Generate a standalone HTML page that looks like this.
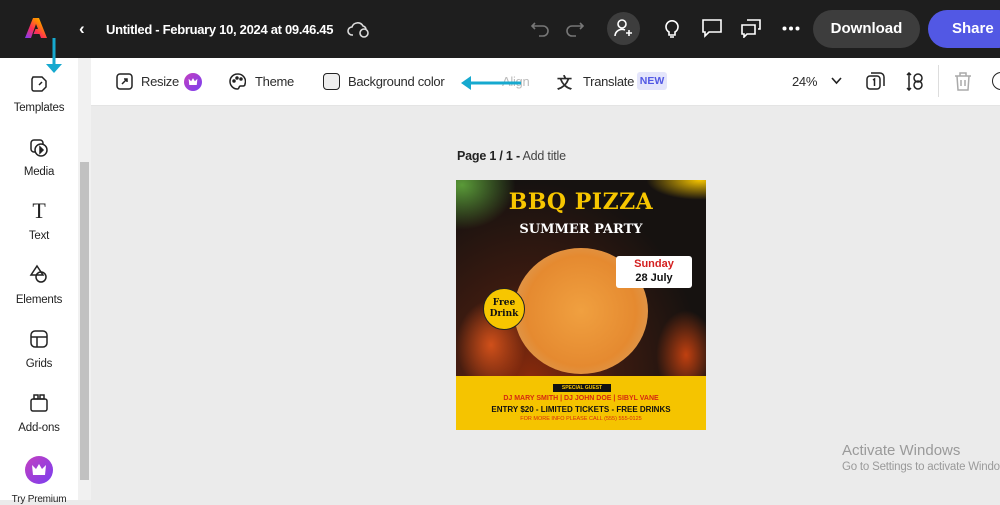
<!DOCTYPE html>
<html><head><meta charset="utf-8"><style>
*{margin:0;padding:0;box-sizing:border-box}
body{width:1000px;height:500px;overflow:hidden;background:#ebebeb;font-family:"Liberation Sans",sans-serif;position:relative}
.top{position:absolute;left:0;top:0;width:1000px;height:58px;background:#1e1e1e;color:#fff}
.abs{position:absolute;white-space:nowrap}
.side{position:absolute;left:0;top:58px;width:78px;height:442px;background:#fff}
.sb{position:absolute;left:78px;top:58px;width:13px;height:442px;background:#f1f1f1}
.thumb{position:absolute;left:80px;top:162px;width:9px;height:318px;background:#c1c1c1}
.tool{position:absolute;left:91px;top:58px;width:909px;height:48px;background:#fff;border-bottom:1px solid #e4e4e4}
.si{position:absolute;width:78px;text-align:center;font-size:11.5px;color:#222;letter-spacing:-0.2px}
.tl{position:absolute;top:74px;font-size:13px;color:#2c2c2c;letter-spacing:-0.3px;white-space:nowrap}
svg{position:absolute}
</style></head><body>
<div class="top">
 <svg style="left:24px;top:16px" width="24" height="24" viewBox="0 0 24 24"><defs><linearGradient id="g" x1="0" y1="1" x2="1" y2="0"><stop offset="0" stop-color="#7b3cff"/><stop offset=".4" stop-color="#ff2d55"/><stop offset=".7" stop-color="#ff8a00"/><stop offset="1" stop-color="#ffd000"/></linearGradient></defs><path d="M9 2h6l8 20h-6l-1.5-4h-6l2-5h2.5l-2-5-5 14H1z" fill="url(#g)"/></svg>
 <div class="abs" style="left:79px;top:19px;font-size:17px;font-weight:bold">&#8249;</div>
 <div class="abs" style="left:106px;top:22px;font-size:13px;font-weight:bold;letter-spacing:-0.3px">Untitled - February 10, 2024 at 09.46.45</div>
 <svg style="left:347px;top:19px" width="24" height="20" viewBox="0 0 24 20" fill="none" stroke="#ddd" stroke-width="1.6"><path d="M6 16h-1a4 4 0 010-8 6 6 0 0111-1 4 4 0 013 3"/><circle cx="17" cy="14" r="4"/></svg>
 <svg style="left:531px;top:19px" width="20" height="18" viewBox="0 0 20 18" fill="none" stroke="#777" stroke-width="1.6"><path d="M4 4l-3 3 3 3M1 7h11a5 5 0 010 10H8"/></svg>
 <svg style="left:564px;top:19px" width="20" height="18" viewBox="0 0 20 18" fill="none" stroke="#777" stroke-width="1.6"><path d="M16 4l3 3-3 3M19 7H8a5 5 0 000 10h4"/></svg>
 <div class="abs" style="left:607px;top:12px;width:33px;height:33px;border-radius:50%;background:#3d3d3d"></div>
 <svg style="left:614px;top:18px" width="20" height="20" viewBox="0 0 20 20" fill="none" stroke="#fff" stroke-width="1.6"><circle cx="8" cy="6" r="4"/><path d="M1 18a7 7 0 0110-6M15 12v6M12 15h6"/></svg>
 <svg style="left:664px;top:18px" width="16" height="20" viewBox="0 0 16 20" fill="none" stroke="#fff" stroke-width="1.6"><path d="M5 14a6 6 0 116 0v3H5zM6 19h4"/></svg>
 <svg style="left:701px;top:18px" width="22" height="20" viewBox="0 0 22 20" fill="none" stroke="#fff" stroke-width="1.6"><path d="M2 2h18v12H8l-4 4v-4H2z"/></svg>
 <svg style="left:740px;top:18px" width="22" height="20" viewBox="0 0 22 20" fill="none" stroke="#fff" stroke-width="1.6"><path d="M7 2h13v9h-2M2 7h13v9H7l-3 3v-3H2z"/></svg>
 <svg style="left:782px;top:26px" width="18" height="5" viewBox="0 0 18 5" fill="#fff"><circle cx="2.5" cy="2.5" r="2"/><circle cx="9" cy="2.5" r="2"/><circle cx="15.5" cy="2.5" r="2"/></svg>
 <div class="abs" style="left:813px;top:10px;width:107px;height:38px;border-radius:19px;background:#3d3d3d;font-size:15px;font-weight:bold;text-align:center;line-height:38px">Download</div>
 <div class="abs" style="left:928px;top:10px;width:90px;height:38px;border-radius:19px;background:#5258e4;font-size:15px;font-weight:bold;line-height:38px;padding-left:24px">Share</div>
</div>
<div class="side">
 <svg style="left:29px;top:16px" width="20" height="20" viewBox="0 0 20 20" fill="none" stroke="#222" stroke-width="1.5"><path d="M4 3h9l4 4v6l-4 4H5a2 2 0 01-2-2V5z"/><path d="M10 11l3-3"/></svg>
 <div class="si" style="top:44px">Templates</div>
 <svg style="left:29px;top:80px" width="20" height="20" viewBox="0 0 20 20" fill="none" stroke="#222" stroke-width="1.5"><rect x="2" y="2" width="12" height="12" rx="3"/><circle cx="12" cy="12" r="6" fill="#fff"/><path d="M11 9l3 3-3 3z" fill="#222"/></svg>
 <div class="si" style="top:108px">Media</div>
 <div class="si" style="top:140px;font-size:22px;font-family:'Liberation Serif',serif">T</div>
 <div class="si" style="top:172px">Text</div>
 <svg style="left:29px;top:206px" width="20" height="20" viewBox="0 0 20 20" fill="none" stroke="#222" stroke-width="1.5"><path d="M8 2l6 9H2z"/><circle cx="12" cy="13" r="5"/></svg>
 <div class="si" style="top:236px">Elements</div>
 <svg style="left:29px;top:271px" width="20" height="20" viewBox="0 0 20 20" fill="none" stroke="#222" stroke-width="1.5"><rect x="2" y="2" width="16" height="16" rx="4"/><path d="M2 8h16M8 8v10"/></svg>
 <div class="si" style="top:300px">Grids</div>
 <svg style="left:29px;top:335px" width="20" height="20" viewBox="0 0 20 20" fill="none" stroke="#222" stroke-width="1.5"><rect x="2" y="6" width="16" height="12" rx="2"/><rect x="5" y="2" width="4" height="4"/><rect x="11" y="2" width="4" height="4"/></svg>
 <div class="si" style="top:364px">Add-ons</div>
 <div class="abs" style="left:25px;top:398px;width:28px;height:28px;border-radius:50%;background:linear-gradient(135deg,#c33fc0,#7a3ff0)"></div>
 <svg style="left:31px;top:405px" width="16" height="13" viewBox="0 0 16 13"><path d="M1 2l4 4 3-5 3 5 4-4-1 10H2z" fill="#fff"/></svg>
 <div class="si" style="top:436px;font-size:10px">Try Premium</div>
</div>
<div class="sb"></div><div class="thumb"></div>
<svg style="left:44px;top:38px" width="20" height="36" viewBox="0 0 20 36"><path d="M10 0v30" stroke="#16a9cf" stroke-width="3"/><path d="M2 26l8 9 8-9z" fill="#16a9cf"/></svg>
<div class="tool"></div>
<svg style="left:116px;top:73px" width="17" height="17" viewBox="0 0 17 17" fill="none" stroke="#222" stroke-width="1.5"><rect x="1" y="1" width="15" height="15" rx="3"/><path d="M6 11l5-5M8 6h3v3"/></svg>
<div class="tl" style="left:141px">Resize</div>
<div class="abs" style="left:184px;top:73px;width:18px;height:18px;border-radius:50%;background:linear-gradient(135deg,#c33fc0,#7a3ff0)"></div>
<svg style="left:188px;top:77px" width="10" height="9" viewBox="0 0 16 13"><path d="M1 2l4 4 3-5 3 5 4-4-1 10H2z" fill="#fff"/></svg>
<svg style="left:229px;top:73px" width="17" height="17" viewBox="0 0 17 17" fill="none" stroke="#222" stroke-width="1.5"><path d="M8.5 1a7.5 7.5 0 000 15c2 0 1-3 3-3h3a2 2 0 001.5-2A7.5 7.5 0 008.5 1z"/><circle cx="5" cy="8" r="1" fill="#222"/><circle cx="8" cy="5" r="1" fill="#222"/><circle cx="12" cy="6" r="1" fill="#222"/></svg>
<div class="tl" style="left:255px">Theme</div>
<div class="abs" style="left:323px;top:73px;width:17px;height:17px;border:1.6px solid #222;border-radius:4px;background:#eee"></div>
<div class="tl" style="left:348px">Background color</div>
<div class="tl" style="left:502px;color:#bbb">Align</div>
<svg style="left:461px;top:75px" width="60" height="16" viewBox="0 0 60 16"><path d="M8 8h52" stroke="#16a9cf" stroke-width="3"/><path d="M0 8l10-7v14z" fill="#16a9cf"/></svg>
<div class="tl" style="left:557px;font-weight:bold;font-size:15px;top:72px">&#25991;</div>
<div class="tl" style="left:583px">Translate</div>
<div class="abs" style="left:637px;top:72px;width:30px;height:18px;background:#e4e5fb;border-radius:3px;color:#5258e4;font-size:10.5px;font-weight:bold;text-align:center;line-height:18px">NEW</div>
<div class="tl" style="left:792px">24%</div>
<svg style="left:831px;top:77px" width="11" height="8" viewBox="0 0 11 8" fill="none" stroke="#222" stroke-width="1.6"><path d="M1 1l4.5 5L10 1"/></svg>
<svg style="left:866px;top:72px" width="19" height="19" viewBox="0 0 19 19" fill="none" stroke="#222" stroke-width="1.5"><rect x="1" y="4" width="13" height="13" rx="3"/><path d="M5 1h9a4 4 0 014 4v9"/><path d="M7 8l1.5-1v7" /></svg>
<svg style="left:906px;top:72px" width="18" height="19" viewBox="0 0 18 19" fill="none" stroke="#222" stroke-width="1.5"><path d="M3 1v17M1 3l2-2 2 2M1 16l2 2 2-2"/><circle cx="12" cy="6" r="4"/><circle cx="12" cy="13" r="4"/></svg>
<div class="abs" style="left:938px;top:65px;width:1px;height:32px;background:#ddd"></div>
<svg style="left:954px;top:72px" width="18" height="19" viewBox="0 0 18 19" fill="none" stroke="#aaa" stroke-width="1.5"><path d="M1 4h16M6 4V1h6v3M3 4l1 14h10l1-14M7 8v6M11 8v6"/></svg>
<div class="abs" style="left:992px;top:72px;width:18px;height:18px;border:1.6px solid #222;border-radius:50%"></div>
<div class="abs" style="left:457px;top:149px;font-size:12.5px;color:#222;letter-spacing:-0.2px"><b>Page 1 / 1 -</b> <span style="color:#444">Add title</span></div>
<!-- poster -->
<div class="abs" style="left:456px;top:180px;width:250px;height:250px;overflow:hidden;background:radial-gradient(ellipse at 30% 80%,#8a2a0c 0,#3a1a10 35%,#161210 70%)">
 <div class="abs" style="left:0;top:0;width:60px;height:50px;background:radial-gradient(ellipse at 10% 10%,#5a9a38,transparent 70%)"></div>
 <div class="abs" style="left:190px;top:0;width:60px;height:20px;background:radial-gradient(ellipse at 90% 0,#f5c400,transparent 70%)"></div>
 <div class="abs" style="left:0;top:120px;width:70px;height:90px;background:radial-gradient(ellipse,#d0501a,transparent 70%)"></div>
 <div class="abs" style="left:200px;top:130px;width:60px;height:90px;background:radial-gradient(ellipse,#c04010,transparent 70%)"></div>
 <div class="abs" style="left:0;top:9px;width:250px;text-align:center;color:#f7c600;font-family:'DejaVu Serif',serif;font-weight:bold;font-size:22px;letter-spacing:0.5px">BBQ PIZZA</div>
 <div class="abs" style="left:0;top:42px;width:250px;text-align:center;color:#fff;font-family:'DejaVu Serif',serif;font-weight:bold;font-size:13px">SUMMER PARTY</div>
 <div class="abs" style="left:58px;top:68px;width:134px;height:126px;border-radius:50%;background:radial-gradient(circle,#f0a040 0,#e58a30 60%,#d9a060 88%,#b8884c 100%)"></div>
 <div class="abs" style="left:160px;top:76px;width:76px;height:32px;background:#fff;border-radius:3px"></div>
 <div class="abs" style="left:160px;top:78px;width:76px;text-align:center;color:#d42020;font-weight:bold;font-size:11px">Sunday</div>
 <div class="abs" style="left:160px;top:92px;width:76px;text-align:center;color:#111;font-weight:bold;font-size:11px">28 July</div>
 <div class="abs" style="left:27px;top:108px;width:42px;height:42px;border-radius:50%;background:#f7c600;border:1px solid #222;color:#111;font-family:'DejaVu Serif',serif;font-weight:bold;font-size:9px;text-align:center;padding-top:9px;line-height:11px">Free<br>Drink</div>
 <div class="abs" style="left:0;top:196px;width:250px;height:54px;background:#f5c400"></div>
 <div class="abs" style="left:97px;top:204px;width:58px;height:8px;background:#111;color:#f5c400;font-size:5px;text-align:center;line-height:8px;font-weight:bold">SPECIAL GUEST</div>
 <div class="abs" style="left:0;top:215px;width:250px;text-align:center;color:#d62a10;font-size:7px;font-weight:bold">DJ MARY SMITH | DJ JOHN DOE | SIBYL VANE</div>
 <div class="abs" style="left:0;top:225px;width:250px;text-align:center;color:#111;font-size:8px;font-weight:bold">ENTRY $20 - LIMITED TICKETS - FREE DRINKS</div>
 <div class="abs" style="left:0;top:236px;width:250px;text-align:center;color:#d62a10;font-size:5.5px">FOR MORE INFO PLEASE CALL (555) 555-0125</div>
</div>
<div class="abs" style="left:842px;top:442px;font-size:15px;color:#9a9a9a">Activate Windows</div>
<div class="abs" style="left:842px;top:461px;font-size:11.5px;color:#9a9a9a;letter-spacing:-0.2px">Go to Settings to activate Windows.</div>
</body></html>
